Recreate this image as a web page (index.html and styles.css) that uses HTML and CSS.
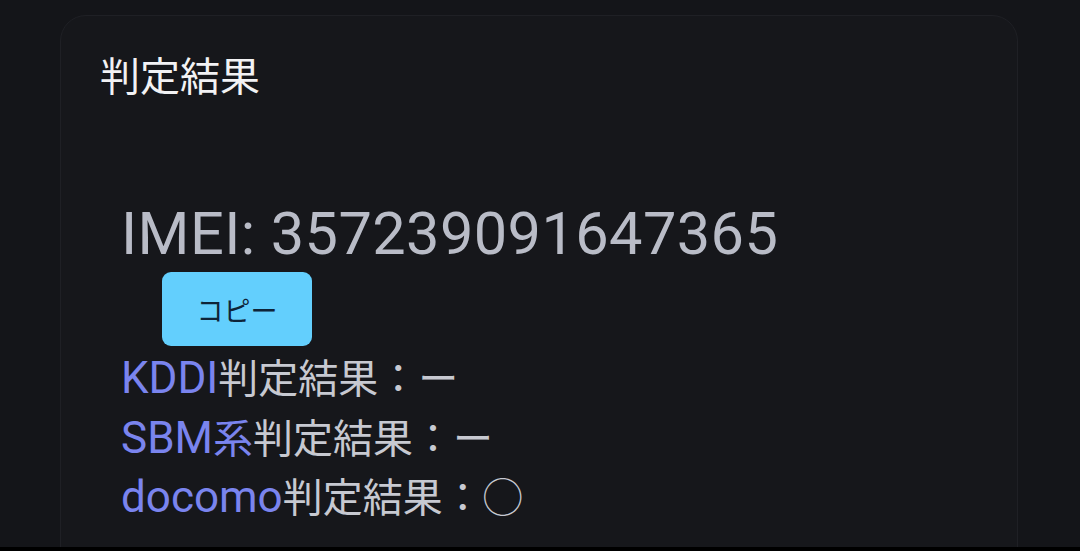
FILE: index.html
```html
<!DOCTYPE html>
<html lang="ja">
    <head>
        <meta charset="UTF-8">
        <meta name="viewport" content="width=device-width, initial-scale=1.0">
        <title>判定結果</title>
        <link rel="stylesheet" href="styles.css">
    </head>
    <body>
        <div class="card">
            <h2 class="card-title">判定結果</h2>
            <div class="result">
                <div class="imei">IMEI: 357239091647365</div>
                <button class="copy-btn">コピー</button>
                <div class="carrier"><span class="carrier-name">KDDI</span>判定結果：ー</div>
                <div class="carrier"><span class="carrier-name">SBM<span class="kanji">系</span></span>判定結果：ー</div>
                <div class="carrier"><span class="carrier-name">docomo</span>判定結果：◯</div>
            </div>
        </div>
        <div class="nav-bar"></div>
    </body>
</html>
```

FILE: styles.css
```css
html, body {
    height: 100%;
}
body {
    margin: 0;
    background-color: #141519;
    font-family: Roboto, "Noto Sans CJK JP", sans-serif;
    overflow: hidden;
}
.card {
    margin: 15px 0 0 60px;
    width: 958px;
    height: 600px;
    box-sizing: border-box;
    padding: 32px 41px 0;
    background: #16171b;
    border: 1px solid #1f2025;
    border-radius: 26px;
    box-shadow: 0px 0px 12px rgba(255, 255, 255, 0.015);
}
.card-title {
    margin: 0 0 0 -2px;
    font-family: "Noto Sans CJK JP", sans-serif;
    font-size: 40px;
    font-weight: 400;
    line-height: 52px;
    color: #f2f2f4;
}
.result {
    margin-top: 102px;
    padding-left: 21px;
}
.imei {
    font-size: 59.5px;
    line-height: 64px;
    color: #b9bcc7;
    letter-spacing: 0.4px;
    margin-left: -2px;
}
.copy-btn {
    display: block;
    margin: 6px 0 4px 39px;
    width: 150px;
    height: 74px;
    background-color: #63cffd;
    color: #0e2438;
    border: none;
    border-radius: 9px;
    font-family: "Noto Sans CJK JP", sans-serif;
    font-size: 27px;
    padding: 0;
}
.carrier {
    font-size: 40px;
    line-height: 59.5px;
    height: 59.5px;
    color: #c7c9d1;
    margin-left: -2px;
}
.carrier-name {
    color: #7a84ee;
    font-size: 44px;
    line-height: 1;
}
.kanji {
    font-size: 40px;
}
.nav-bar {
    position: fixed;
    left: 0;
    right: 0;
    bottom: 0;
    height: 4px;
    background: #000;
}
```
